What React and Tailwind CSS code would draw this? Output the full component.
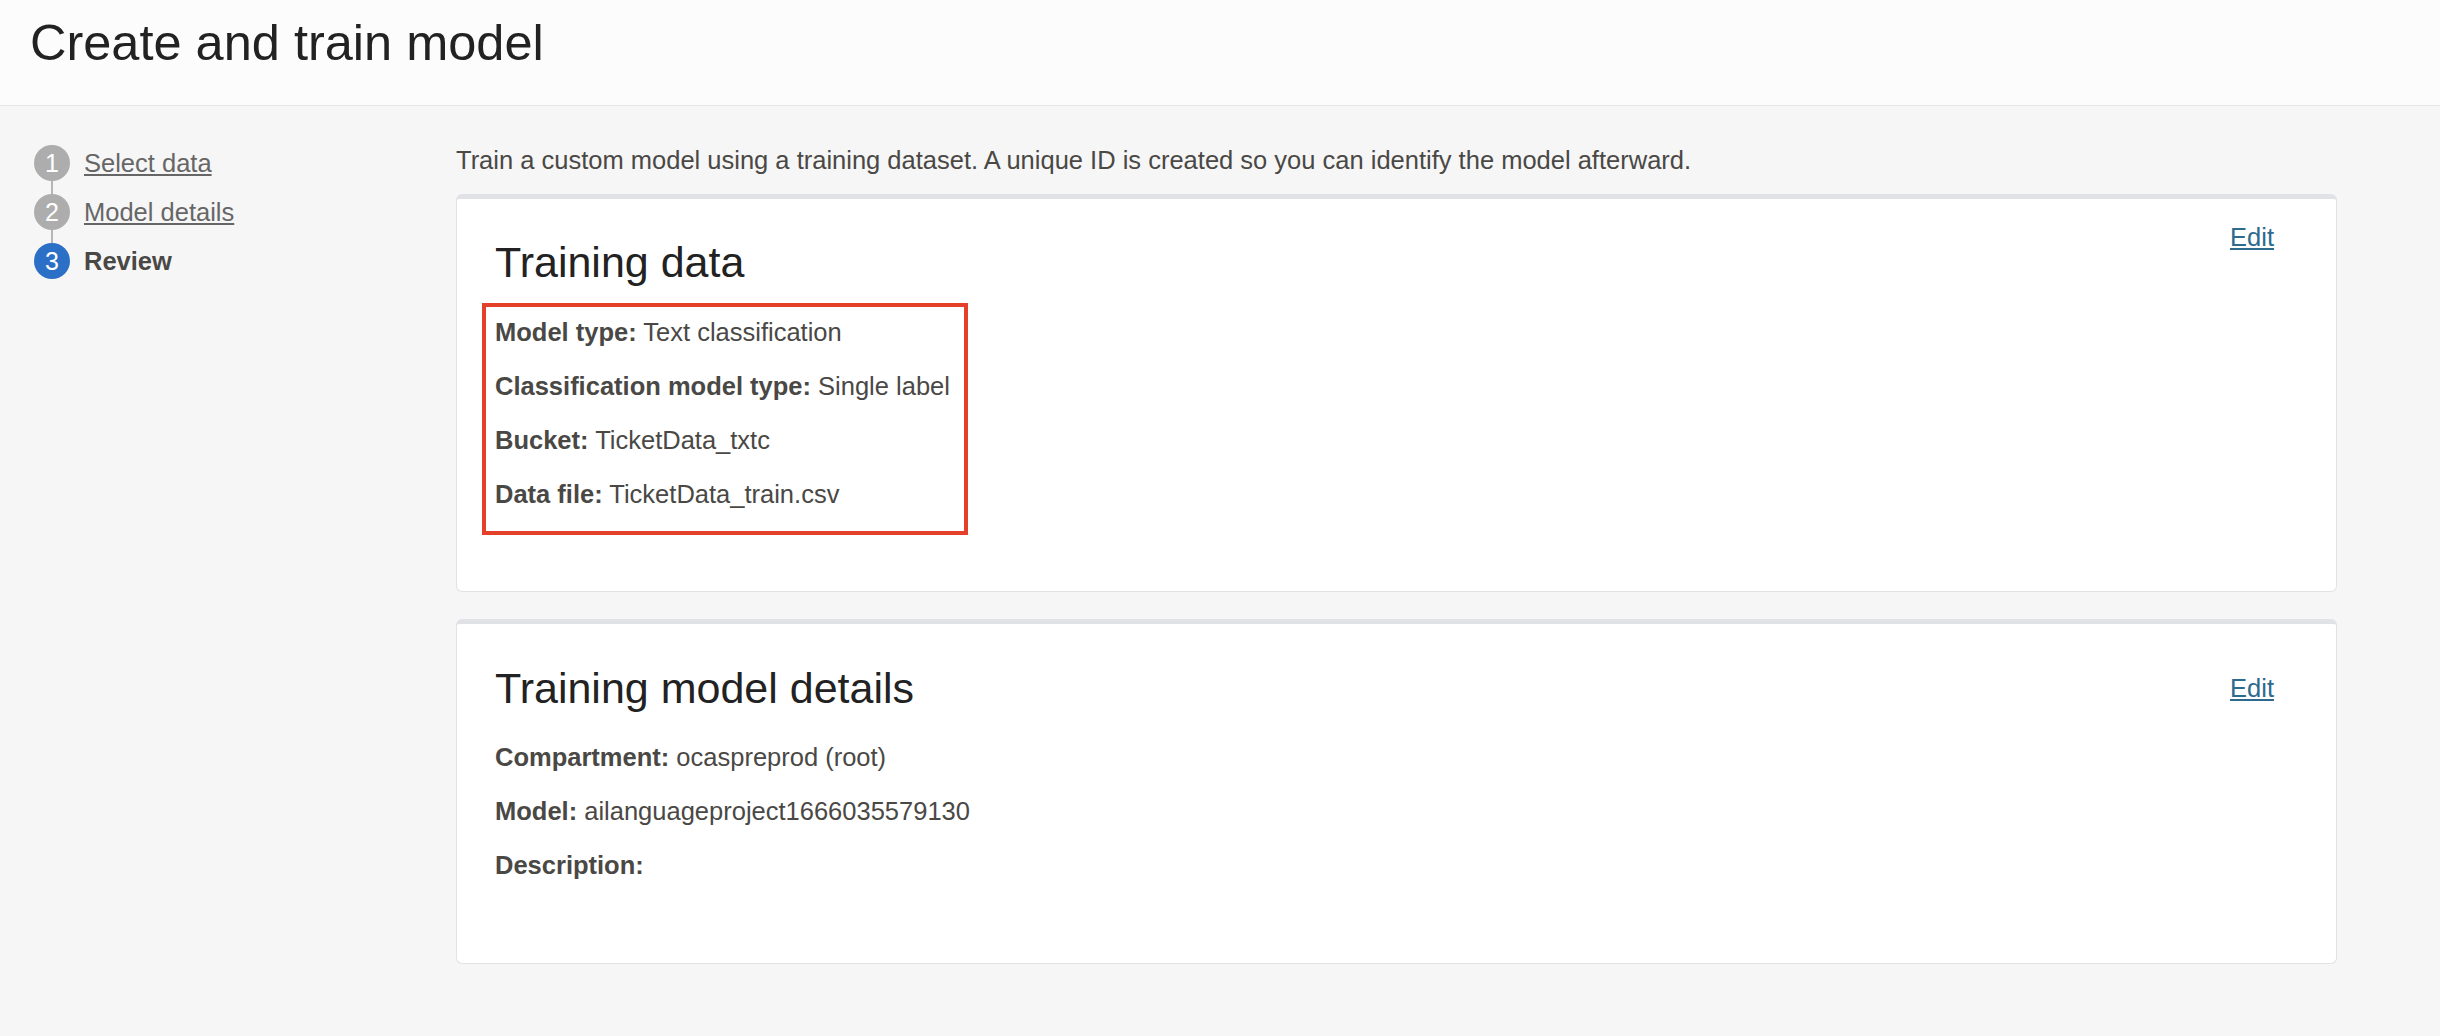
import React from "react";

const steps = [
  { n: 1, label: "Select data", done: true },
  { n: 2, label: "Model details", done: true },
  { n: 3, label: "Review", done: false },
];

const Row = ({ label, value }) => (
  <p className="leading-[30px]">
    <span className="font-bold">{label}</span>
    {value ? ` ${value}` : ""}
  </p>
);

const EditLink = ({ className }) => (
  <a href="#" className={`text-[25.5px] leading-[30px] text-[#2d6a8e] underline ${className}`}>
    Edit
  </a>
);

export default function App() {
  return (
    <div
      className="min-h-screen bg-[#f6f6f6] text-[#4a4845]"
      style={{ fontFamily: '"Liberation Sans", Arial, sans-serif' }}
    >
      {/* Page header */}
      <header className="h-[106px] bg-[#fcfcfc] border-b border-[#e6e6e6] pl-[30px] flex items-center">
        <h1 className="text-[50.5px] leading-[60px] text-[#222] -mt-[20px]">Create and train model</h1>
      </header>

      <div className="flex">
        {/* Wizard steps */}
        <nav className="w-[456px] shrink-0 pl-[34px] pt-[39px]">
          {steps.map((s, i) => (
            <div key={s.n}>
              <div className="flex items-center gap-[14px]">
                <span
                  className={`w-[36px] h-[36px] rounded-full flex items-center justify-center text-white text-[25px] leading-none ${
                    s.done ? "bg-[#adadad]" : "bg-[#2c6fc6]"
                  }`}
                >
                  {s.n}
                </span>
                {s.done ? (
                  <a href="#" className="text-[25.5px] leading-[30px] text-[#666] underline">
                    {s.label}
                  </a>
                ) : (
                  <span className="text-[25.5px] leading-[30px] font-bold text-[#4a4845]">{s.label}</span>
                )}
              </div>
              {i < steps.length - 1 && <div className="ml-[17px] w-[2px] h-[13px] bg-[#b5b5b5]" />}
            </div>
          ))}
        </nav>

        {/* Review content */}
        <main className="flex-1 pr-[103px] pt-[39px] text-[25.5px]">
          <p className="leading-[30px] mb-[19px]">
            Train a custom model using a training dataset. A unique ID is created so you can identify the model
            afterward.
          </p>

          <div className="flex flex-col gap-[27px]">
            {/* Training data */}
            <section className="bg-white border border-[#e2e2e2] border-t-[5px] border-t-[#e1e2e6] rounded-md pl-[38px] pr-[62px] pt-[38px] pb-[56px]">
              <div className="flex items-start justify-between">
                <h2 className="text-[43px] leading-[50px] text-[#222]">Training data</h2>
                <EditLink className="-mt-[15px]" />
              </div>
              <div className="mt-[16px] -ml-[13px] w-[486px] border-4 border-[#e5402a] pl-[9px] pt-[10px] pb-[22px] flex flex-col gap-[24px]">
                <Row label="Model type:" value="Text classification" />
                <Row label="Classification model type:" value="Single label" />
                <Row label="Bucket:" value="TicketData_txtc" />
                <Row label="Data file:" value="TicketData_train.csv" />
              </div>
            </section>

            {/* Training model details */}
            <section className="bg-white border border-[#e2e2e2] border-t-[5px] border-t-[#e1e2e6] rounded-md pl-[38px] pr-[62px] pt-[39px] pb-[83px]">
              <div className="flex items-center justify-between">
                <h2 className="text-[43px] leading-[50px] text-[#222]">Training model details</h2>
                <EditLink />
              </div>
              <div className="mt-[29px] flex flex-col gap-[24px]">
                <Row label="Compartment:" value="ocaspreprod (root)" />
                <Row label="Model:" value="ailanguageproject1666035579130" />
                <Row label="Description:" />
              </div>
            </section>
          </div>
        </main>
      </div>
    </div>
  );
}
